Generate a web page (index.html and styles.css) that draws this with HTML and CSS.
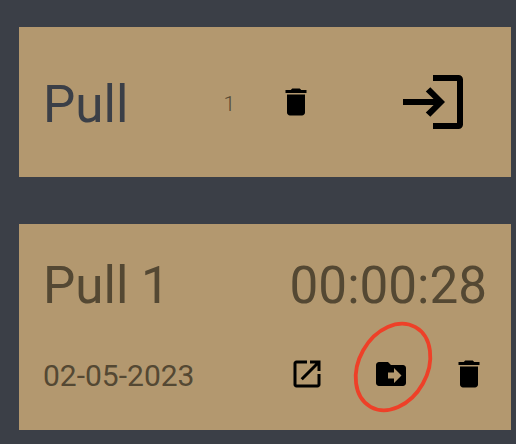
FILE: index.html
```html
<!DOCTYPE html>
<html lang="en">
<head>
<meta charset="utf-8">
<title>Pull</title>
<link rel="stylesheet" href="styles.css">
</head>
<body>
<main class="list">
  <section class="card group">
    <h1 class="title group-title">Pull</h1>
    <span class="count">1</span>
    <svg class="icon group-delete" viewBox="0 0 24 24"><path d="M6 19c0 1.1.9 2 2 2h8c1.1 0 2-.9 2-2V7H6v12zM19 4h-3.5l-1-1h-5l-1 1H5v2h14V4z"/></svg>
    <svg class="icon-large" viewBox="0 0 24 24"><path d="M11 3h8.5A1.5 1.5 0 0 1 21 4.5v15a1.5 1.5 0 0 1-1.5 1.5H11v-2h8V5h-8zM10.1 7.1 15 12l-4.9 4.9-1.5-1.4 2.6-2.5H1v-2h10.2L8.6 8.5z"/></svg>
  </section>
  <section class="card session">
    <div class="row">
      <h2 class="title">Pull 1</h2>
      <span class="title">00:00:28</span>
    </div>
    <div class="row meta">
      <span class="date">02-05-2023</span>
      <div class="actions">
        <svg class="icon" viewBox="0 0 24 24"><path d="M19 19H5V5h7V3H5c-1.11 0-2 .9-2 2v14c0 1.1.89 2 2 2h14c1.1 0 2-.9 2-2v-7h-2v7zM14 3v2h3.59l-9.83 9.83 1.41 1.41L19 6.41V10h2V3h-7z"/></svg>
        <span class="move">
          <svg class="icon" viewBox="0 0 24 24"><path d="M20 6h-8l-2-2H4c-1.1 0-1.99.9-1.99 2L2 18c0 1.1.9 2 2 2h16c1.1 0 2-.9 2-2V8c0-1.1-.9-2-2-2zm-6 12v-3h-4v-4h4V8l5 5-5 5z"/></svg>
          <svg class="ring" viewBox="-50 -50 100 100"><ellipse rx="34.2" ry="45.7" transform="rotate(29.4)"/></svg>
        </span>
        <svg class="icon" viewBox="0 0 24 24"><path d="M6 19c0 1.1.9 2 2 2h8c1.1 0 2-.9 2-2V7H6v12zM19 4h-3.5l-1-1h-5l-1 1H5v2h14V4z"/></svg>
      </div>
    </div>
  </section>
</main>
</body>
</html>
```
FILE: styles.css
```css
* {
  box-sizing: border-box;
}

body {
  margin: 0;
  height: 444px;
  overflow: hidden;
  background: #3b3f47;
  font-family: Roboto, sans-serif;
  color: #544833;
}

.list {
  display: flex;
  flex-direction: column;
  gap: 47.4px;
  padding: 27px 5px 0 19px;
}

.card {
  background: #b3986f;
}

.group {
  display: flex;
  align-items: center;
  height: 150px;
  padding: 0 39px 0 24px;
}

.title {
  margin: 0;
  font-size: 51.2px;
  font-weight: 400;
  line-height: 60px;
  white-space: nowrap;
}

.group-title {
  width: 180px;
  padding-top: 6px;
  color: #3b3f47;
}

.count {
  width: 54.6px;
  padding: 3px 0 0 0.5px;
  font-size: 21px;
  font-weight: 300;
}

.icon,
.icon-large {
  display: block;
  flex: none;
  width: 36px;
  height: 36px;
}

.icon-large {
  width: 72px;
  height: 72px;
  margin-left: auto;
}

.session {
  height: 206px;
  padding: 32px 24px 0;
}

.row {
  display: flex;
  align-items: center;
  justify-content: space-between;
}

.meta {
  margin-top: 40px;
  height: 36px;
}

.date {
  padding-top: 3px;
  font-size: 30px;
  line-height: 36px;
}

.actions {
  display: flex;
  gap: 45px;
}

.move {
  position: relative;
  margin: 0 -3px 0 3px;
}

.ring {
  position: absolute;
  left: -30.5px;
  top: -39px;
  width: 100px;
  height: 100px;
  fill: none;
  stroke: #ee4028;
  stroke-width: 3.8;
}
```
